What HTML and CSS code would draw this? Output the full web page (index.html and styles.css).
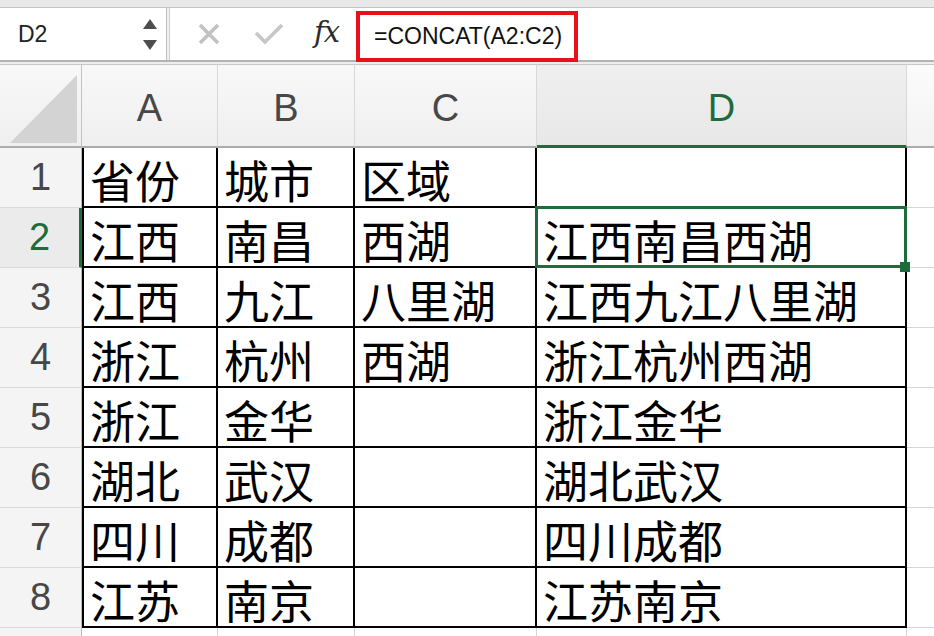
FILE: index.html
```html
<!DOCTYPE html>
<html lang="zh">
<head>
<meta charset="utf-8">
<title>CONCAT</title>
<link rel="stylesheet" href="styles.css">
</head>
<body>
<div class="app">
  <div class="topstrip"></div>
  <div class="fbar">
    <div class="namebox">
      <span class="ref">D2</span>
      <span class="spin">
        <svg width="14" height="32" viewBox="0 0 14 32"><path d="M7 0 L14 10 L0 10 Z" fill="#4d4d4d"/><path d="M0 21 L14 21 L7 31 Z" fill="#4d4d4d"/></svg>
      </span>
    </div>
    <div class="sep"></div>
    <div class="tools">
      <svg class="ic-x" width="22" height="20" viewBox="0 0 22 20"><path d="M2 1 L20 19 M20 1 L2 19" stroke="#c2c2c2" stroke-width="3.6" fill="none"/></svg>
      <svg class="ic-ok" width="30" height="22" viewBox="0 0 30 22"><path d="M2 10 L11 19 L28 2" stroke="#c6c6c6" stroke-width="3.6" fill="none" stroke-linejoin="miter"/></svg>
      <span class="fx">fx</span>
    </div>
    <div class="formula">=CONCAT(A2:C2)</div>
  </div>
  <div class="gap"></div>
  <div class="sheet">
    <div class="corner"><svg width="82" height="84" viewBox="0 0 82 84"><path d="M77 11 L77 79 L10 79 Z" fill="#d3d3d3"/></svg></div>
    <div class="ch">A</div>
    <div class="ch">B</div>
    <div class="ch">C</div>
    <div class="ch sel">D</div>
    <div class="ch e"></div>

    <div class="rh">1</div>
    <div class="c a">省份</div>
    <div class="c">城市</div>
    <div class="c">区域</div>
    <div class="c"></div>
    <div class="c e"></div>

    <div class="rh sel">2</div>
    <div class="c a">江西</div>
    <div class="c">南昌</div>
    <div class="c">西湖</div>
    <div class="c active">江西南昌西湖</div>
    <div class="c e"></div>

    <div class="rh">3</div>
    <div class="c a">江西</div>
    <div class="c">九江</div>
    <div class="c">八里湖</div>
    <div class="c">江西九江八里湖</div>
    <div class="c e"></div>

    <div class="rh">4</div>
    <div class="c a">浙江</div>
    <div class="c">杭州</div>
    <div class="c">西湖</div>
    <div class="c">浙江杭州西湖</div>
    <div class="c e"></div>

    <div class="rh">5</div>
    <div class="c a">浙江</div>
    <div class="c">金华</div>
    <div class="c"></div>
    <div class="c">浙江金华</div>
    <div class="c e"></div>

    <div class="rh">6</div>
    <div class="c a">湖北</div>
    <div class="c">武汉</div>
    <div class="c"></div>
    <div class="c">湖北武汉</div>
    <div class="c e"></div>

    <div class="rh">7</div>
    <div class="c a">四川</div>
    <div class="c">成都</div>
    <div class="c"></div>
    <div class="c">四川成都</div>
    <div class="c e"></div>

    <div class="rh">8</div>
    <div class="c a">江苏</div>
    <div class="c">南京</div>
    <div class="c"></div>
    <div class="c">江苏南京</div>
    <div class="c e"></div>

    <div class="rh"></div>
    <div class="b"></div>
    <div class="b"></div>
    <div class="b"></div>
    <div class="b"></div>
    <div class="b e"></div>
  </div>
</div>
</body>
</html>
```

FILE: styles.css
```css
* { box-sizing: border-box; }
html, body { margin: 0; padding: 0; }
body {
  width: 934px;
  height: 636px;
  overflow: hidden;
  background: #fff;
  font-family: "Liberation Sans", Arial, sans-serif;
}
.app { width: 934px; height: 636px; overflow: hidden; }

.topstrip {
  height: 8px;
  background: #e8e8e8;
  border-bottom: 1px solid #c4c4c4;
}
.fbar {
  height: 54px;
  display: flex;
  background: #fff;
  border-bottom: 2px solid #b3b3b3;
}
.namebox {
  width: 167px;
  display: flex;
  align-items: center;
  justify-content: space-between;
  padding: 0 9px 0 18px;
  border-right: 1px solid #bdbdbd;
}
.ref {
  font-size: 23px;
  color: #222;
}
.spin { display: flex; padding-top: 2px; }
.sep {
  width: 3px;
  background: #f1f1f1;
  border-right: 1px solid #cfcfcf;
}
.tools {
  display: flex;
  align-items: center;
  padding-left: 28px;
  width: 186px;
}
.ic-x { margin-right: 34px; }
.ic-ok { margin-right: 30px; }
.fx {
  font-family: "DejaVu Serif", "Liberation Serif", serif;
  font-style: italic;
  font-size: 29px;
  letter-spacing: -1px;
  color: #2b2b2b;
  padding-bottom: 4px;
}
.formula {
  width: 222px;
  margin-top: 3px;
  margin-bottom: -2px;
  border: 4px solid #e8101b;
  display: flex;
  align-items: center;
  padding-left: 14px;
  font-size: 23px;
  color: #111;
  position: relative;
}
.gap {
  height: 2px;
  background: #eeeeee;
}

.sheet {
  display: grid;
  grid-template-columns: 82px 136px 137px 182px 370px 27px;
  grid-template-rows: 84px repeat(9, 60px);
}
.corner, .ch {
  background: linear-gradient(#f8f8f8, #efefef);
  border-top: 1px solid #c8c8c8;
  border-bottom: 2px solid #acacac;
  border-right: 1px solid #d8d8d8;
}
.corner { border-right: 1px solid #c2c2c2; }
.corner svg { display: block; margin-top: -1px; }
.ch {
  display: flex;
  align-items: center;
  justify-content: center;
  padding-top: 6px;
  font-size: 38px;
  color: #474747;
}
.ch.sel {
  background: linear-gradient(#efefef, #e8e8e8);
  color: #1f6b3c;
  border-bottom: 3px solid #1f6b3c;
}
.ch.e { border-right: none; background: linear-gradient(#fbfbfb, #f3f3f3); }

.rh {
  background: #f4f4f4;
  border-bottom: 1px solid #d9d9d9;
  border-right: 1px solid #bcbcbc;
  display: flex;
  align-items: center;
  justify-content: center;
  font-size: 38px;
  color: #474747;
}
.rh.sel {
  background: #ebebeb;
  color: #1f6b3c;
  border-right: 3px solid #1f6b3c;
}

.c {
  background: #fff;
  border-right: 2px solid #000;
  border-bottom: 2px solid #000;
  display: flex;
  align-items: center;
  padding: 5px 0 0 6px;
  font-family: "Noto Sans CJK SC", "Noto Sans CJK JP", sans-serif;
  font-size: 45px;
  line-height: 1;
  color: #000;
  white-space: nowrap;
}
.c.a { border-left: 2px solid #000; }
.c.e {
  border-right: none;
  border-bottom: 1px solid #d6d6d6;
}
.b {
  background: #fff;
  border-right: 1px solid #d6d6d6;
}
.b.e { border-right: none; }

.c.active { position: relative; }
.c.active::after {
  content: "";
  position: absolute;
  left: -2px;
  top: -2px;
  right: -2px;
  bottom: -2px;
  border: 3px solid #1f6b3c;
}
.c.active::before {
  content: "";
  position: absolute;
  right: -5px;
  bottom: -6px;
  width: 10px;
  height: 10px;
  background: #1f6b3c;
  z-index: 2;
}
```
